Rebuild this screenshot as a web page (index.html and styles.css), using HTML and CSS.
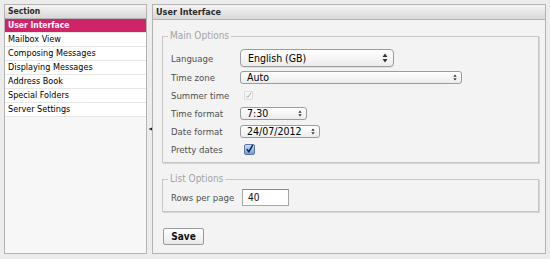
FILE: index.html
```html
<!DOCTYPE html>
<html lang="en">
<head>
<meta charset="utf-8">
<title>Preferences</title>
<link rel="stylesheet" href="styles.css">
</head>
<body>
<div class="app">
  <aside class="sidebar">
    <div class="panel-head">Section</div>
    <ul class="sections">
      <li class="active">User Interface</li>
      <li>Mailbox View</li>
      <li>Composing Messages</li>
      <li>Displaying Messages</li>
      <li>Address Book</li>
      <li>Special Folders</li>
      <li>Server Settings</li>
    </ul>
  </aside>
  <div class="splitter">
    <svg width="4" height="4" viewBox="0 0 4 4"><path d="M0 0.5 L3.5 2 L0 3.5 Z" transform="rotate(180 2 2)" fill="#222"/></svg>
  </div>
  <main class="prefs">
    <div class="panel-head">User Interface</div>
    <div class="prefs-body">
      <fieldset class="group main-group">
        <legend>Main Options</legend>
        <div class="row row-tall">
          <label>Language</label>
          <div class="select select-lg">
            <span>English (GB)</span>
            <svg width="6" height="10" viewBox="0 0 6 10"><path d="M3 0.5 L5.5 4 L0.5 4 Z M3 9.5 L5.5 6 L0.5 6 Z" fill="#333"/></svg>
          </div>
        </div>
        <div class="row">
          <label>Time zone</label>
          <div class="select select-tz">
            <span>Auto</span>
            <svg width="4" height="7" viewBox="0 0 4 7"><path d="M2 0.5 L3.7 2.8 L0.3 2.8 Z M2 6.5 L3.7 4.2 L0.3 4.2 Z" fill="#333"/></svg>
          </div>
        </div>
        <div class="row">
          <label>Summer time</label>
          <span class="check check-disabled">
            <svg width="9" height="9" viewBox="0 0 9 9"><path d="M1.5 4.8 L3.5 7.2 L7.8 0.8" fill="none" stroke="#a8a8a8" stroke-width="1.2"/></svg>
          </span>
        </div>
        <div class="row">
          <label>Time format</label>
          <div class="select select-time">
            <span>7:30</span>
            <svg width="4" height="7" viewBox="0 0 4 7"><path d="M2 0.5 L3.7 2.8 L0.3 2.8 Z M2 6.5 L3.7 4.2 L0.3 4.2 Z" fill="#333"/></svg>
          </div>
        </div>
        <div class="row">
          <label>Date format</label>
          <div class="select select-date">
            <span>24/07/2012</span>
            <svg width="4" height="7" viewBox="0 0 4 7"><path d="M2 0.5 L3.7 2.8 L0.3 2.8 Z M2 6.5 L3.7 4.2 L0.3 4.2 Z" fill="#333"/></svg>
          </div>
        </div>
        <div class="row">
          <label>Pretty dates</label>
          <span class="check check-on">
            <svg width="10" height="10" viewBox="0 0 10 10"><path d="M2 5.2 L4.2 8 L8.6 0.6" fill="none" stroke="#10203a" stroke-width="1.6"/></svg>
          </span>
        </div>
      </fieldset>
      <fieldset class="group list-group">
        <legend>List Options</legend>
        <div class="row row-input">
          <label>Rows per page</label>
          <span class="text-input">40</span>
        </div>
      </fieldset>
      <button class="save" type="button">Save</button>
    </div>
  </main>
</div>
</body>
</html>
```
FILE: styles.css
```css
html, body {
  margin: 0;
  padding: 0;
}
body {
  background: #ececec;
  font-family: "DejaVu Sans", "Liberation Sans", sans-serif;
  font-stretch: condensed;
  color: #222;
}
.app {
  display: flex;
  height: 259px;
  box-sizing: border-box;
  padding: 4px 4px 5px 4px;
}
.sidebar {
  width: 143px;
  box-sizing: border-box;
  border: 1px solid #b3b3b3;
  background: #f7f7f7;
  display: flex;
  flex-direction: column;
}
.panel-head {
  height: 13px;
  line-height: 13px;
  background: linear-gradient(#f4f4f4, #d8d8d8);
  border-bottom: 1px solid #b5b5b5;
  font-weight: bold;
  font-size: 8.5px;
  padding-left: 3px;
  color: #2a2a2a;
}
.prefs .panel-head {
  height: 14px;
  line-height: 14px;
  font-size: 9px;
}
.sections {
  list-style: none;
  margin: 0;
  padding: 0;
}
.sections li {
  height: 13px;
  line-height: 13px;
  border-bottom: 1px solid #e6e6e6;
  background: #fff;
  padding-left: 3px;
  font-size: 9px;
  color: #000;
  white-space: nowrap;
}
.sections li.active {
  background: #cf2468;
  color: #fff;
  font-weight: bold;
  font-size: 8.5px;
}
.splitter {
  width: 5px;
  display: flex;
  align-items: center;
  justify-content: center;
}
.prefs {
  width: 394px;
  box-sizing: border-box;
  border: 1px solid #b3b3b3;
  background: #f3f3f3;
}
.prefs-body {
  padding: 10px 6px 0 9px;
}
.group {
  margin: 0;
  border: 1px solid #c6c6c6;
  box-shadow: 1px 1px 0 #d6d6d6;
  padding: 6px 8px 4px 8px;
}
.group legend {
  font-size: 10px;
  color: #a3a3a3;
  padding: 0 2px;
  margin-left: -3px;
  line-height: 12px;
}
.list-group {
  margin-top: 10px;
  padding-top: 2px;
  padding-bottom: 4px;
}
.row {
  display: grid;
  grid-template-columns: 69px auto;
  align-items: center;
  height: 18px;
}
.row-tall {
  height: 20px;
}
.row-input {
  height: 20px;
  grid-template-columns: 71px auto;
}
.row label {
  font-size: 9.5px;
  color: #505050;
  white-space: nowrap;
}
.select {
  display: flex;
  align-items: center;
  justify-content: space-between;
  box-sizing: border-box;
  height: 13px;
  border: 1px solid #9c9c9c;
  border-radius: 3px;
  background: linear-gradient(#ffffff, #ececec);
  padding: 0 4px 0 6px;
  font-size: 10.5px;
  color: #000;
}
.select span {
  line-height: 11px;
}
.select-lg {
  width: 154px;
  height: 18px;
  border-radius: 4px;
  font-size: 10.5px;
  padding: 0 5px 0 7px;
  box-shadow: 0 1px 0 #e0e0e0;
}
.select-tz { width: 222px; }
.select-time { width: 67px; }
.select-date { width: 80px; }
.check {
  display: flex;
  align-items: center;
  justify-content: center;
  box-sizing: border-box;
  margin-left: 4px;
}
.check-disabled {
  width: 9px;
  height: 9px;
  border: 1px solid #dcdcdc;
  background: #f6f6f6;
  border-radius: 1px;
}
.check-on {
  width: 11px;
  height: 11px;
  border: 1px solid #5a77a8;
  background: linear-gradient(#c7dcf5, #6f9fdb);
  border-radius: 2px;
}
.text-input {
  display: flex;
  align-items: center;
  box-sizing: border-box;
  width: 47px;
  height: 17px;
  background: #fff;
  border: 1px solid #a6a6a6;
  border-top-color: #8a8a8a;
  padding-left: 5px;
  font-size: 10px;
  color: #111;
}
.save {
  margin: 16px 0 0 1px;
  width: 41px;
  height: 17px;
  padding: 0;
  border: 1px solid #9a9a9a;
  border-radius: 2px;
  background: linear-gradient(#ffffff, #e9e9e9);
  font-family: inherit;
  font-stretch: condensed;
  font-weight: bold;
  font-size: 10px;
  color: #111;
}
```
